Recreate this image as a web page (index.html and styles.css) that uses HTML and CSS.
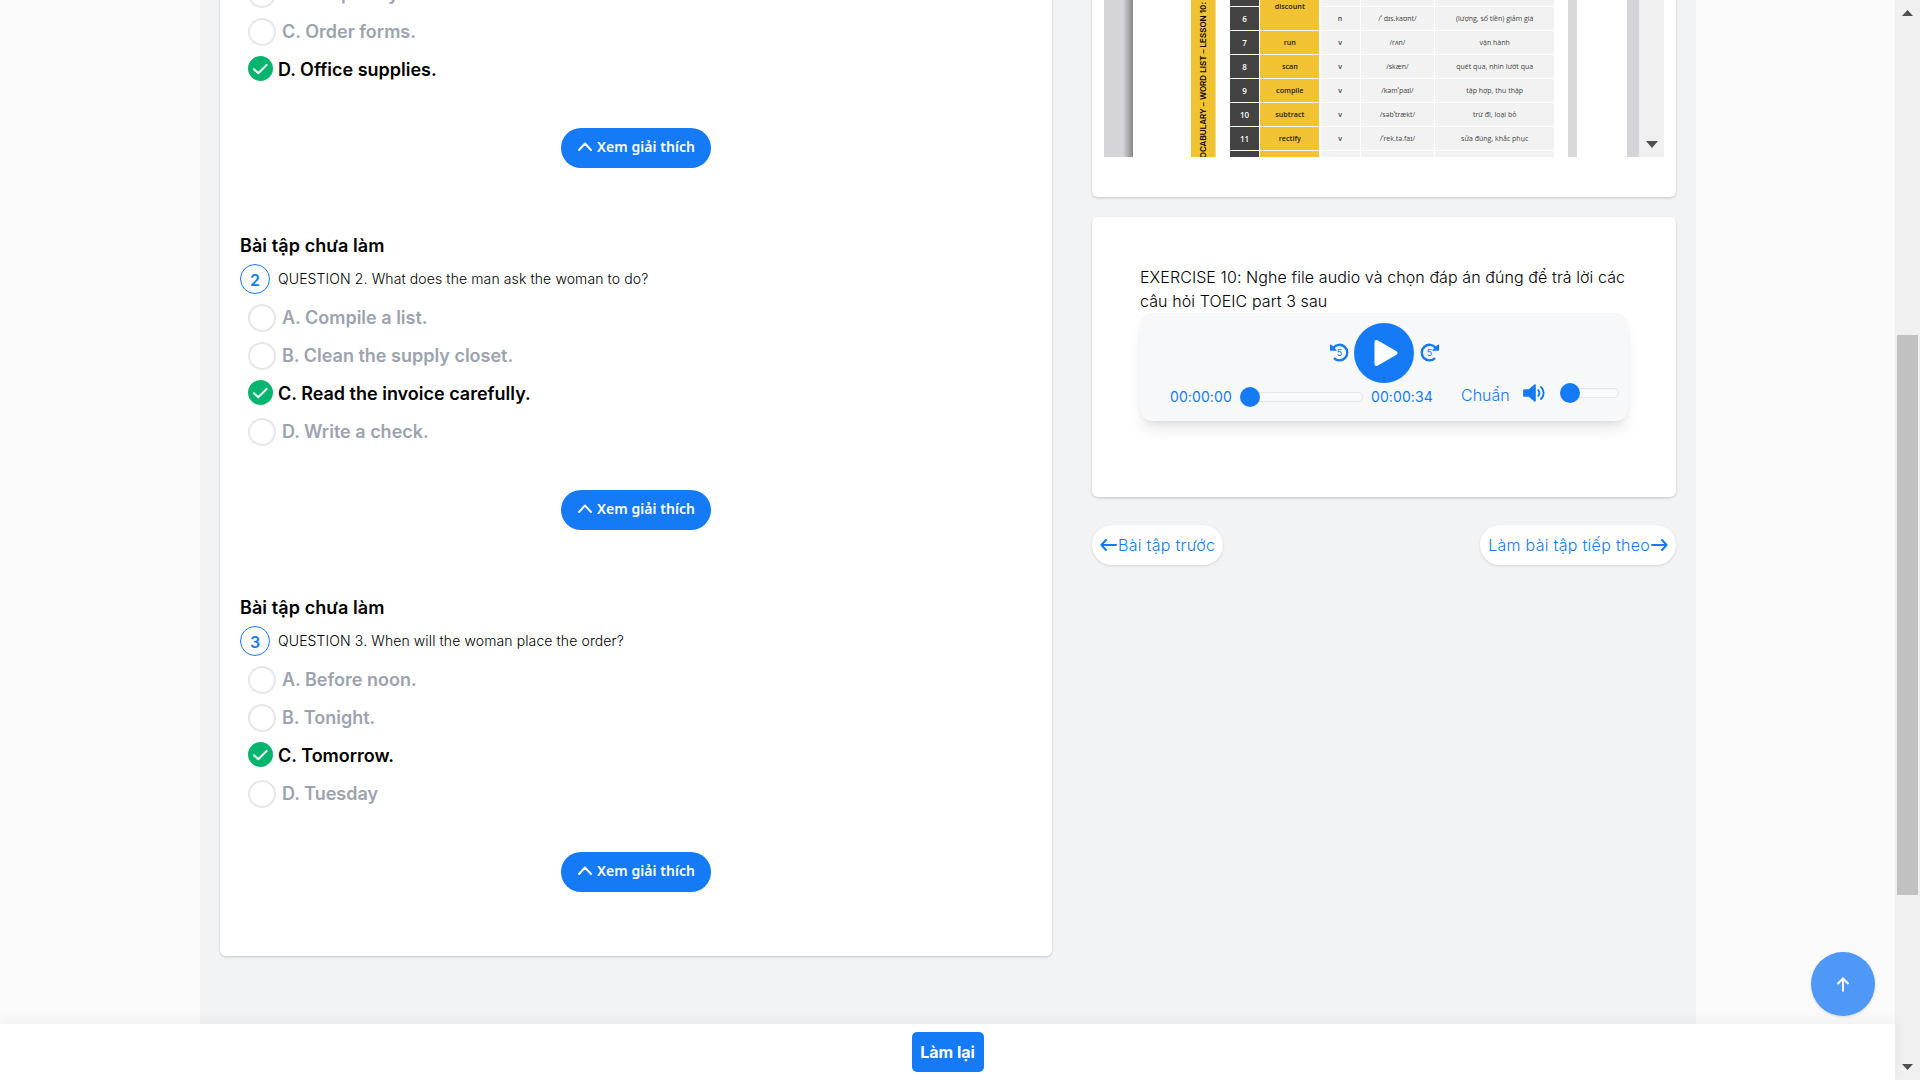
FILE: index.html
```html
<!DOCTYPE html>
<html lang="vi">
<head>
<meta charset="utf-8">
<title>TOEIC Part 3</title>
<link rel="stylesheet" href="styles.css">
</head>
<body>
<svg class="defs" width="0" height="0">
  <symbol id="check" viewBox="0 0 25 25"><circle cx="12.5" cy="12.5" r="12.5" fill="#05b56f"/><path d="M6 13.2l4.3 4.1 8.4-8.4" fill="none" stroke="#fff" stroke-width="2" stroke-linecap="round" stroke-linejoin="round"/></symbol>
  <symbol id="chevron" viewBox="0 0 14 9"><path d="M1 8l6-6.5L13 8" fill="none" stroke="#fff" stroke-width="1.9" stroke-linecap="round" stroke-linejoin="round"/></symbol>
</svg>
<div class="window">
  <div class="page">
    <main class="viewport">
      <div class="container">
        <section class="card questions">
          <article class="question">
            <h2>Bài tập chưa làm</h2>
            <div class="prompt"><span class="num">1</span><p>QUESTION 1. What are the speakers discussing?</p></div>
            <ul>
              <li><i class="radio"></i>A. A budget.</li>
              <li><i class="radio"></i><span>B. Temporary workers.</span></li>
              <li><i class="radio"></i><span>C. Order forms.</span></li>
              <li class="right"><svg class="check"><use href="#check"/></svg><span>D. Office supplies.</span></li>
            </ul>
            <button class="explain"><svg width="14" height="9"><use href="#chevron"/></svg><span>Xem giải thích</span></button>
          </article>
          <article class="question">
            <h2>Bài tập chưa làm</h2>
            <div class="prompt"><span class="num">2</span><p>QUESTION 2. What does the man ask the woman to do?</p></div>
            <ul>
              <li><i class="radio"></i><span>A. Compile a list.</span></li>
              <li><i class="radio"></i><span>B. Clean the supply closet.</span></li>
              <li class="right"><svg class="check"><use href="#check"/></svg><span>C. Read the invoice carefully.</span></li>
              <li><i class="radio"></i><span>D. Write a check.</span></li>
            </ul>
            <button class="explain"><svg width="14" height="9"><use href="#chevron"/></svg><span>Xem giải thích</span></button>
          </article>
          <article class="question">
            <h2>Bài tập chưa làm</h2>
            <div class="prompt"><span class="num">3</span><p>QUESTION 3. When will the woman place the order?</p></div>
            <ul>
              <li><i class="radio"></i><span>A. Before noon.</span></li>
              <li><i class="radio"></i><span>B. Tonight.</span></li>
              <li class="right"><svg class="check"><use href="#check"/></svg><span>C. Tomorrow.</span></li>
              <li><i class="radio"></i><span>D. Tuesday</span></li>
            </ul>
            <button class="explain"><svg width="14" height="9"><use href="#chevron"/></svg><span>Xem giải thích</span></button>
          </article>
        </section>

        <aside class="side">
          <section class="card document">
            <div class="embed">
              <div class="gutter left"></div>
              <div class="sheet">
                <div class="spine"><span>VOCABULARY – WORD LIST – LESSON 10:</span></div>
                <div class="words">
                  <b class="no">5</b><b class="word tall">discount</b><b>v</b><span>/ˈdɪs.kaʊnt/</span><span></span>
                  <b class="no">6</b><b>n</b><span>/ˈ dɪs.kaʊnt/</span><span>(lượng, số tiền) giảm giá</span>
                  <b class="no">7</b><b class="word">run</b><b>v</b><span>/rʌn/</span><span>vận hành</span>
                  <b class="no">8</b><b class="word">scan</b><b>v</b><span>/skæn/</span><span>quét qua, nhìn lướt qua</span>
                  <b class="no">9</b><b class="word">compile</b><b>v</b><span>/kəmˈpaɪl/</span><span>tập hợp, thu thập</span>
                  <b class="no">10</b><b class="word">subtract</b><b>v</b><span>/səbˈtrækt/</span><span>trừ đi, loại bỏ</span>
                  <b class="no">11</b><b class="word">rectify</b><b>v</b><span>/ˈrek.tə.faɪ/</span><span>sửa đúng, khắc phục</span>
                  <b class="no"></b><b class="word"></b><b></b><span></span><span></span>
                </div>
                <div class="edge"></div>
              </div>
              <div class="gutter"></div>
              <div class="embed-scroll"><svg width="12" height="7"><path d="M0 0h12L6 7z" fill="#505050"/></svg></div>
            </div>
          </section>

          <section class="card audio">
            <p>EXERCISE 10: Nghe file audio và chọn đáp án đúng để trả lời các câu hỏi TOEIC part 3 sau</p>
            <div class="player">
              <div class="transport">
                <svg width="19" height="19" viewBox="0 0 19 19"><path d="M3.4 4.7A7.8 7.8 0 1 1 4 15.2" fill="none" stroke="#147af6" stroke-width="2.4"/><path d="M0 1.2l2.2 1.2 4.6 4.8-.6.6H0z" fill="#147af6"/><text x="9.4" y="13" class="five">5</text></svg>
                <button class="play"><svg width="60" height="60"><path d="M22.500 19v22l19-11z" fill="#fff" stroke="#fff" stroke-width="4" stroke-linejoin="round"/></svg></button>
                <svg width="19" height="19" viewBox="0 0 19 19"><path d="M15.6 4.7A7.8 7.8 0 1 0 15 15.2" fill="none" stroke="#147af6" stroke-width="2.4"/><path d="M19 1.2l-2.2 1.2-4.6 4.8.6.6H19z" fill="#147af6"/><text x="9.4" y="13" class="five">5</text></svg>
              </div>
              <div class="controls">
                <span class="time">00:00:00</span>
                <div class="range seek"><i></i></div>
                <span class="time">00:00:34</span>
                <span class="speed">Chuẩn</span>
                <svg class="speaker" width="22" height="18" viewBox="0 0 22 18"><path d="M1.5 5.2h4.200L11.400.500c.600-.500 1.400-.100 1.400.600v15.800c0 .700-.800 1.100-1.400.600l-5.700-4.700H1.500C.700 12.800.100 12.200.100 11.400V6.600C.100 5.800.700 5.200 1.500 5.200z" fill="#147af6"/><path d="M15.200 6.100a4 4 0 0 1 0 5.800M18 3a8.200 8.200 0 0 1 0 12" fill="none" stroke="#147af6" stroke-width="1.9" stroke-linecap="round"/></svg>
                <div class="range volume"><i></i></div>
              </div>
            </div>
          </section>

          <nav class="steps">
            <a><svg width="17" height="12" viewBox="0 0 17 12"><path d="M16 6H2M6 1L1.400 6 6 11" fill="none" stroke="#147af6" stroke-width="2" stroke-linecap="round" stroke-linejoin="round"/></svg><span>Bài tập trước</span></a>
            <a><span>Làm bài tập tiếp theo</span><svg width="17" height="12" viewBox="0 0 17 12"><path d="M1 6h14M11 1l4.600 5-4.600 5" fill="none" stroke="#147af6" stroke-width="2" stroke-linecap="round" stroke-linejoin="round"/></svg></a>
          </nav>
        </aside>
      </div>
    </main>
    <footer class="bar"><button class="redo">Làm lại</button></footer>
    <button class="to-top"><svg width="14" height="15" viewBox="0 0 14 15"><path d="M7 14.500V2M1.500 7L7 1.500 12.500 7" fill="none" stroke="#fff" stroke-width="2"/></svg></button>
  </div>
  <div class="scrollbar">
    <svg width="11" height="6"><path d="M0 6h11L5.500 0z" fill="#505050"/></svg>
    <div class="thumb"></div>
    <svg width="11" height="6"><path d="M0 0h11L5.500 6z" fill="#505050"/></svg>
  </div>
</div>
</body>
</html>
```
FILE: styles.css
```css
* { box-sizing: border-box; }
body { margin: 0; overflow: hidden; font-family: Inter, sans-serif; color: #000; }
h2, p, ul { margin: 0; padding: 0; }
button { border: 0; padding: 0; font-family: inherit; }
svg { display: block; flex: none; }
.defs { position: absolute; }

.window { display: flex; width: 1920px; height: 1080px; }
.page { position: relative; display: flex; flex-direction: column; width: 1895px; background: #fafafa; }
.viewport { height: 1024px; overflow: hidden; padding-left: 200px; }

/* The content is scrolled 152px past the top of the viewport. */
.container { display: flex; align-items: flex-start; gap: 40px; width: 1496px; height: 1200px; margin-top: -152px; padding: 0 20px; background: #f2f3f5; }
.card { background: #fff; border-radius: 6px; box-shadow: 0 1px 3px rgba(0, 0, 0, .12), 0 1px 2px rgba(0, 0, 0, .08); }

.questions { width: 832px; padding: 20px 20px 2px; }
.question { height: 362px; }
.question h2 { font-size: 18px; font-weight: 600; line-height: 32px; letter-spacing: .08px; }
.prompt { display: flex; align-items: center; gap: 8px; height: 34px; }
.prompt p { margin-top: -1px; font-size: 14px; font-weight: 300; letter-spacing: .11px; }
.num { display: flex; align-items: center; justify-content: center; width: 30px; height: 30px; padding-top: 1px; border: 1px solid #147af6; border-radius: 50%; color: #147af6; font-size: 16px; font-weight: 600; }
.question ul { list-style: none; padding: 3px 0 0 8px; }
.question li { display: flex; align-items: center; gap: 6px; height: 38px; font-size: 18px; font-weight: 600; color: #9ca3af; }
.question li span { margin-top: -2px; }
.radio { width: 28px; height: 28px; border: 2px solid #e5e7eb; border-radius: 50%; }
.question li.right { gap: 5px; color: #000; }
.check { width: 25px; height: 25px; margin-bottom: 3px; }
.explain { display: flex; align-items: center; gap: 5px; width: 150px; height: 40px; margin: 39px auto 0 321px; padding: 0 0 3px 17px; border-radius: 20px; background: #147af6; color: #fff; font: 600 14px "Noto Sans", sans-serif; letter-spacing: .06px; }

.side { width: 584px; }
.document { height: 349px; padding: 20px 12px 40px; }
.embed { display: flex; height: 289px; overflow: hidden; }
.gutter { width: 12px; background: #d4d4d9; }
.gutter.left { width: 29px; background: linear-gradient(90deg, #d4d4d9 65%, #a9a9ad 85%, #858588); }
.sheet { display: flex; width: 494px; }
.spine { display: flex; align-items: flex-end; justify-content: center; width: 25px; margin-left: 58px; background: #f1c232; border-right: 1px solid #f6dc87; }
.spine span { margin-bottom: -7px; writing-mode: vertical-rl; transform: rotate(180deg); white-space: nowrap; font-size: 8px; font-weight: 600; line-height: 9px; letter-spacing: .02px; }
.words { display: grid; grid-template-columns: 29px 59px 39px 73px 119px; grid-auto-rows: 23px; gap: 1px 1.300px; width: 325px; margin: 115px 0 0 14px; font: 7px "Open Sans", "Noto Sans", sans-serif; color: #444; }
.words > * { display: flex; align-items: center; justify-content: center; padding-bottom: 1px; background: #f2f2f2; white-space: nowrap; font-weight: 400; }
.words b { font-weight: 600; }
.words .no { background: #434343; color: #fff; font-size: 8px; }
.words .word { background: #f1c232; color: #222; font-size: 7.200px; }
.words .tall { grid-row: span 2; }
.edge { width: 9px; margin-left: 13px; background: #d9d9d9; }
.embed-scroll { display: flex; align-items: flex-end; justify-content: center; width: 25px; padding-bottom: 9px; background: #f0f0f0; }

.audio { height: 280px; margin-top: 20px; padding: 48px; }
.audio p { font-size: 16px; font-weight: 300; line-height: 24px; letter-spacing: .09px; }
.player { height: 108px; padding: 10px 9px 0 30px; border-radius: 12px; background: #f7f8fa; box-shadow: 0 10px 15px -3px rgba(0, 0, 0, .1), 0 4px 6px -2px rgba(0, 0, 0, .06); }
.transport { display: flex; align-items: center; justify-content: center; gap: 5.5px; margin-left: -21px; }
.transport > svg { margin-top: -1px; }
.play { width: 60px; height: 60px; border-radius: 50%; background: #147af6; }
.five { font-size: 9px; fill: #147af6; text-anchor: middle; }
.controls { display: flex; align-items: center; height: 28px; color: #147af6; }
.time { width: 62px; margin-top: -1px; font-size: 14px; letter-spacing: .1px; }
.range { display: flex; align-items: center; height: 10px; border: 1px solid #e5e7eb; border-radius: 5px; background: #f9fafb; }
.range i { width: 20px; height: 20px; margin-left: -1px; flex: none; border-radius: 50%; background: #147af6; }
.seek { width: 123px; margin: 0 8px; }
.speed { width: 62px; margin: -4px 0 0 28px; font-size: 16px; font-weight: 300; }
.speaker { margin-top: -8px; }
.volume { width: 59px; margin: -8px 0 0 15px; }

.steps { display: flex; justify-content: space-between; margin-top: 28px; }
.steps a { display: flex; align-items: center; height: 40px; padding: 0 8px; gap: 1px; border-radius: 20px; background: #fff; box-shadow: 0 1px 3px rgba(0, 0, 0, .12); color: #147af6; font-size: 16px; font-weight: 300; letter-spacing: .29px; white-space: nowrap; }

.bar { display: flex; align-items: center; justify-content: center; height: 56px; background: #fff; box-shadow: 0 -2px 14px rgba(0, 0, 0, .05); z-index: 1; }
.redo { width: 72px; height: 40px; border-radius: 5px; background: #147af6; color: #fff; font-size: 16px; font-weight: 700; white-space: nowrap; }
.to-top { position: absolute; right: 20px; bottom: 64px; z-index: 2; display: flex; align-items: center; justify-content: center; width: 64px; height: 64px; border-radius: 50%; background: #4f98f7; box-shadow: 0 1px 3px rgba(0, 0, 0, .15); }

.scrollbar { display: flex; flex-direction: column; align-items: center; justify-content: space-between; width: 25px; padding: 10px 0; background: #f0f0f0; }
.thumb { width: 21px; height: 560px; margin-top: 150px; background: #c1c1c1; }
```
